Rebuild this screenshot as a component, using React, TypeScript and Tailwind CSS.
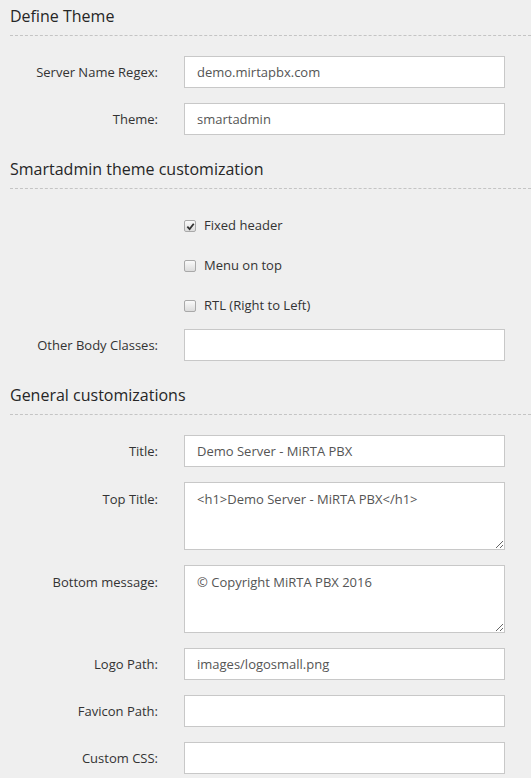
import React from "react";

const inputCls =
  "h-[32px] w-[321px] border border-[#c8c8c8] bg-white px-[12px] text-[13px] text-[#555] outline-none";

function Heading({ title, top }: { title: string; top: string }) {
  return (
    <div className={`${top} border-b border-dashed border-[#c4c4c4] pb-[7px]`}>
      <h2 className="text-[16px] leading-[24px] text-[#262626]">{title}</h2>
    </div>
  );
}

function Row({
  label,
  value = "",
  area = false,
}: {
  label: string;
  value?: string;
  area?: boolean;
}) {
  return (
    <div className="flex items-start">
      <label
        className={`w-[148px] shrink-0 text-right text-[13px] text-[#333] ${
          area ? "pt-[8px] leading-[18px]" : "leading-[32px]"
        }`}
      >
        {label}
      </label>
      <div className="ml-[26px]">
        {area ? (
          <textarea
            readOnly
            value={value}
            className="block h-[68px] w-[321px] border border-[#c8c8c8] bg-white px-[12px] py-[7px] text-[13px] leading-[18px] text-[#555] outline-none"
          />
        ) : (
          <input readOnly value={value} className={inputCls} />
        )}
      </div>
    </div>
  );
}

function Check({ label, checked = false }: { label: string; checked?: boolean }) {
  return (
    <div className="flex h-[20px] items-center pl-[174px]">
      <span className="flex h-[12px] w-[12px] items-center justify-center rounded-[2px] border border-[#a9a9a9] bg-gradient-to-b from-[#fafafa] to-[#dcdcdc]">
        {checked && (
          <svg width="9" height="9" viewBox="0 0 10 10">
            <path d="M1.5 5.2 L4 7.8 L8.6 2" fill="none" stroke="#333" strokeWidth="2" />
          </svg>
        )}
      </span>
      <span className="ml-[8px] text-[13px] text-[#333]">{label}</span>
    </div>
  );
}

export default function App() {
  return (
    <div
      className="min-h-[778px] bg-[#efefef] pl-[10px]"
      style={{ fontFamily: '"Open Sans", sans-serif' }}
    >
      <Heading title="Define Theme" top="pt-[4px]" />
      <div className="mt-[20px] flex flex-col gap-[15px]">
        <Row label="Server Name Regex:" value="demo.mirtapbx.com" />
        <Row label="Theme:" value="smartadmin" />
      </div>

      <Heading title="Smartadmin theme customization" top="mt-[22px]" />
      <div className="mt-[27px] flex flex-col gap-[20px]">
        <Check label="Fixed header" checked />
        <Check label="Menu on top" />
        <Check label="RTL (Right to Left)" />
      </div>
      <div className="mt-[13px]">
        <Row label="Other Body Classes:" />
      </div>

      <Heading title="General customizations" top="mt-[22px]" />
      <div className="mt-[20px] flex flex-col gap-[15px]">
        <Row label="Title:" value="Demo Server - MiRTA PBX" />
        <Row label="Top Title:" value="<h1>Demo Server - MiRTA PBX</h1>" area />
        <Row label="Bottom message:" value="© Copyright MiRTA PBX 2016" area />
        <Row label="Logo Path:" value="images/logosmall.png" />
        <Row label="Favicon Path:" />
        <Row label="Custom CSS:" />
      </div>
    </div>
  );
}
